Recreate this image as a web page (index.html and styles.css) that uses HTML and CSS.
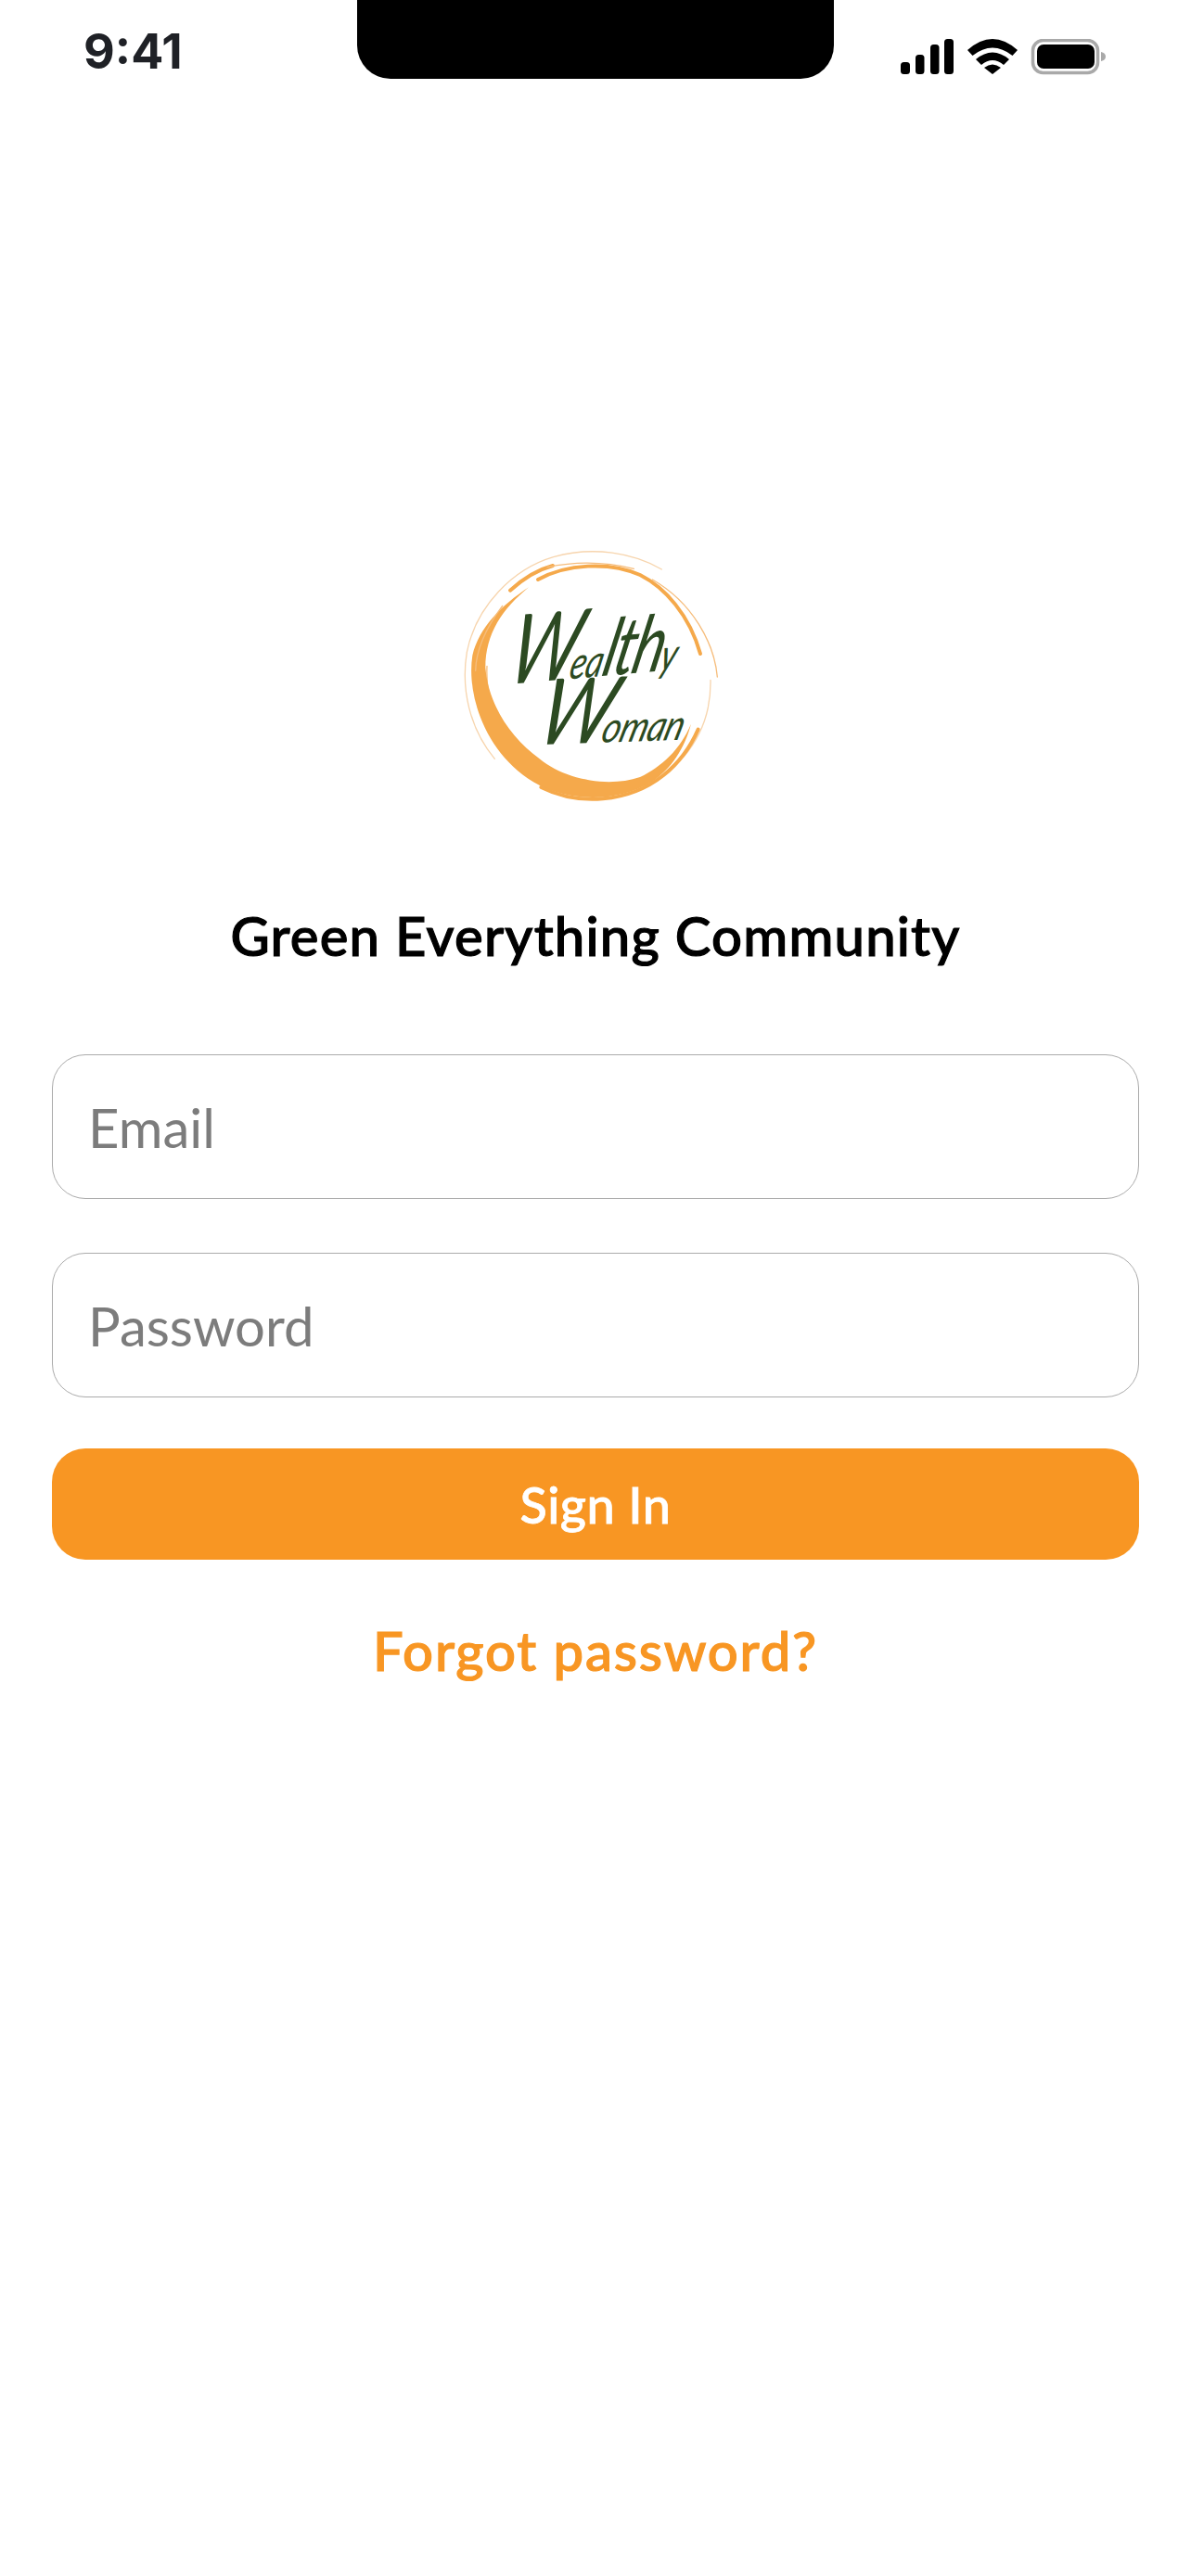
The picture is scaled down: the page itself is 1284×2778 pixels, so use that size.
FILE: index.html
```html
<!DOCTYPE html>
<html lang="en">
<head>
    <meta charset="UTF-8">
    <meta name="viewport" content="width=device-width, initial-scale=1.0">
    <title>Sign In</title>
    <link rel="stylesheet" href="styles.css">
</head>
<body>
    <div class="statusBar">
        <span class="time">9:41</span>
        <div class="notch"></div>
        <svg class="statusIcons" width="222" height="40" viewBox="0 0 222 40">
            <rect x="0" y="25" width="10" height="13" rx="3.5"/>
            <rect x="16" y="17" width="9.5" height="21" rx="3.5"/>
            <rect x="32" y="6" width="9.5" height="32" rx="3.5"/>
            <rect x="47" y="0" width="10" height="38" rx="3.5"/>
            <path d="M72 12 Q99 -12 126 12 L120.500 18 Q99 1 77.500 18 Z"/>
            <path d="M81 22 Q99 7 117 22 L111 28 Q99 18 87 28 Z"/>
            <path d="M90 31 Q99 24 108 31 L99 38 Z"/>
            <rect class="batteryFrame" x="142.500" y="1.500" width="70" height="35" rx="11"/>
            <rect x="147" y="6" width="62" height="26" rx="7"/>
            <path class="batteryNub" d="M216 14 Q221 15 221 19 Q221 23 216 24 Z"/>
        </svg>
    </div>
    <div class="container">
        <svg class="logo" width="380" height="320" viewBox="-54 0 1140 960">
            <!-- thin outer strokes -->
            <path class="brushPale" d="M730 132 C640 80 510 55 380 92 C250 130 130 250 100 400 C80 520 110 650 190 745"/>
            <path class="brushPale" d="M888 490 C890 590 860 670 800 740"/>
            <path class="brushThin" d="M910 480 C900 370 830 240 700 165"/>
            <path class="brushThin" d="M165 445 C160 560 200 680 300 745 C370 790 430 810 490 815"/>
            <!-- main brush ring, thickest at lower left -->
            <path class="brush" d="M300 190 C210 250 140 320 118 410 C98 540 160 725 315 820 C420 885 590 888 700 818 C760 778 805 710 825 632 C790 715 730 770 660 804 C560 838 420 815 335 745 C240 675 170 570 160 450 C160 340 215 260 300 190 Z"/>
            <path class="brushMid" d="M378 120 C340 130 290 155 240 200"/>
            <path class="brushMid" d="M330 165 C420 115 560 105 660 150 C740 190 820 280 855 405"/>
            <path class="brushThin" d="M360 125 C440 108 540 105 640 130"/>
            <path class="brushMid" d="M848 650 C800 760 700 860 540 874 C470 880 400 867 340 837"/>
            <path class="brushThin" d="M215 250 C170 310 130 380 128 460"/>
            <text class="logoText" transform="translate(222 505) rotate(-5) skewX(-18) scale(0.84 1.1)"><tspan class="logoCap">W</tspan><tspan>ea</tspan><tspan class="logoTall">lth</tspan><tspan>y</tspan></text>
            <text class="logoText" transform="translate(315 700) rotate(-2) skewX(-18) scale(0.88 1.05)"><tspan class="logoCap">W</tspan><tspan>oman</tspan></text>
        </svg>
        <h1 class="pageTitle">Green Everything Community</h1>
        <input class="textInput" type="email" placeholder="Email">
        <input class="textInput passwordInput" type="password" placeholder="Password">
        <button class="signInBtn" type="button">Sign In</button>
        <a class="forgotLink" href="#">Forgot password?</a>
    </div>
</body>
</html>
```

FILE: styles.css
```css
html,body {
    margin: 0;
    height: 100%;
    background: #fff;
}
body {
    font-family: "Lato", "Liberation Sans", sans-serif;
    position: relative;
}
.statusBar {
    height: 85px;
    display: flex;
    justify-content: space-between;
    align-items: flex-start;
    padding: 0 91px 0 90px;
}
.time {
    margin-top: 26px;
    font-family: "Inter", sans-serif;
    font-size: 52px;
    line-height: 60px;
    font-weight: 700;
    color: #1f2126;
}
.notch {
    position: absolute;
    top: 0;
    left: 385px;
    width: 514px;
    height: 85px;
    background: #000;
    border-radius: 0 0 36px 36px;
}
.statusIcons {
    margin-top: 42px;
}
.batteryFrame {
    fill: none;
    stroke: #a9a9a9;
    stroke-width: 3.5;
}
.batteryNub {
    fill: #a9a9a9;
}
.container {
    display: flex;
    flex-flow: column;
    align-items: center;
    padding: 0 56px;
}
.logo {
    margin-top: 485px;
}
.brush {
    fill: #f5a94b;
}
.brushMid,.brushThin,.brushPale {
    fill: none;
    stroke-linecap: round;
}
.brushMid {
    stroke: #f5a94b;
    stroke-width: 12;
}
.brushThin {
    stroke: #f6bd7c;
    stroke-width: 4;
}
.brushPale {
    stroke: #f7d5ae;
    stroke-width: 4;
}
.logoText {
    font-family: "Lato", sans-serif;
    font-style: italic;
    font-weight: 400;
    font-size: 130px;
    letter-spacing: -2px;
    fill: #2c4a22;
}
.logoCap {
    font-size: 280px;
    letter-spacing: -24px;
}
.logoTall {
    font-size: 230px;
    letter-spacing: -10px;
}
.pageTitle {
    margin: 84px 0 0;
    font-size: 58px;
    line-height: 70px;
    font-weight: 500;
    letter-spacing: 1.2px;
    -webkit-text-stroke: 1.2px #000;
    color: #000;
    white-space: nowrap;
}
.textInput {
    box-sizing: border-box;
    width: 100%;
    height: 156px;
    margin-top: 93px;
    padding: 0 38px;
    border: 1px solid #ababab;
    border-radius: 36px;
    background: #fff;
    font-family: inherit;
    font-size: 58px;
    color: #000;
    outline: none;
}
.textInput::placeholder {
    color: #7c7c7c;
    opacity: 1;
}
.passwordInput {
    margin-top: 58px;
}
.signInBtn {
    width: 100%;
    height: 120px;
    margin-top: 55px;
    border: 0;
    border-radius: 36px;
    background: #f89623;
    font-family: inherit;
    font-size: 54px;
    font-weight: 500;
    letter-spacing: 0.5px;
    -webkit-text-stroke: 0.8px #fff;
    color: #fff;
}
.forgotLink {
    margin-top: 63px;
    font-size: 58px;
    line-height: 70px;
    font-weight: 500;
    letter-spacing: 1.8px;
    -webkit-text-stroke: 1.2px #f89623;
    color: #f89623;
    text-decoration: none;
}
```
